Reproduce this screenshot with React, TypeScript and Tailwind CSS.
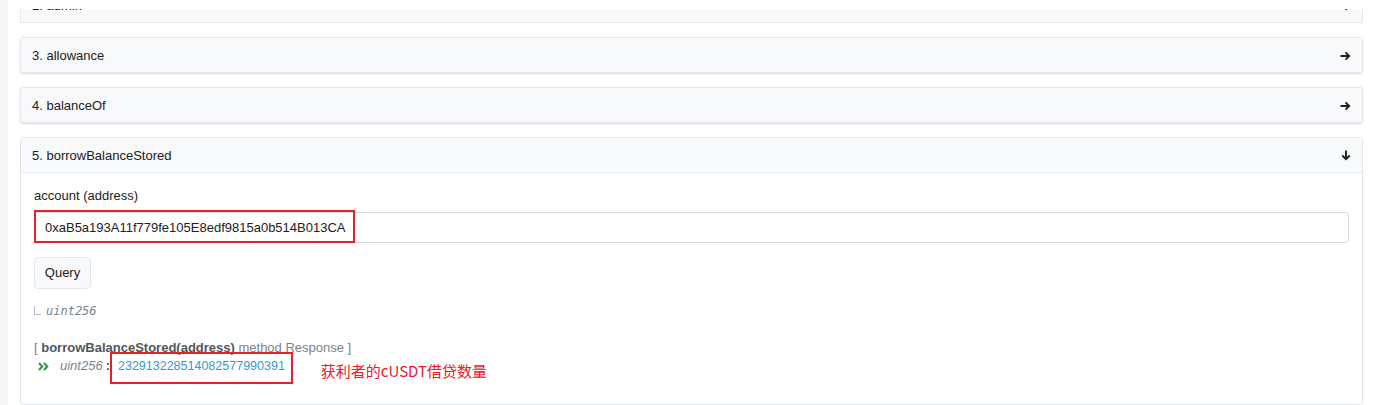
import React from "react";

const font = { fontFamily: '"Liberation Sans", Arial, sans-serif' };

function ArrowRight() {
	return (
		<svg width="11" height="10" viewBox="0 0 11 10" className="text-[#1e2022]">
			<path d="M0.5 5h8.5M5.5 1.3L9.2 5L5.5 8.7" fill="none" stroke="currentColor" strokeWidth="1.9" />
		</svg>
	);
}

function ArrowDown() {
	return (
		<svg width="10" height="11" viewBox="0 0 10 11" className="text-[#1e2022]">
			<path d="M5 0.5v8.5M1.3 5.5L5 9.2L8.7 5.5" fill="none" stroke="currentColor" strokeWidth="1.9" />
		</svg>
	);
}

function Chevrons() {
	return (
		<svg width="11" height="9" viewBox="0 0 11 9" className="text-[#2b9f4c]">
			<path d="M1 1l3.2 3.5L1 8M6 1l3.2 3.5L6 8" fill="none" stroke="currentColor" strokeWidth="2.2" />
		</svg>
	);
}

function Header({ title, open }: { title: string; open?: boolean }) {
	return (
		<div
			className={`flex items-center justify-between pl-[11px] pr-[11px] pt-[1px] bg-[#f8f9fa] text-[13px] text-[#1e2022] ${open ? "h-[35px] border-b border-[#e7eaf3]" : "h-[34px]"}`}
		>
			<span>{title}</span>
			{open ? <ArrowDown /> : <ArrowRight />}
		</div>
	);
}

function Card({ title }: { title: string }) {
	return (
		<div className="border border-[#e3e6ec] rounded-[3px] bg-[#f8f9fa] shadow-[0_1px_2px_rgba(0,0,0,0.14)]">
			<Header title={title} />
		</div>
	);
}

export default function App() {
	return (
		<div className="w-[1373px] h-[405px] overflow-hidden bg-white flex" style={font}>
			<div className="w-[8px] shrink-0 bg-[#f5f6f8]" />
			<div className="flex-1 flex flex-col pl-[12px] pr-[10px]">
				<div className="h-[9px] bg-white shrink-0" />
				<div className="h-[14px] overflow-hidden flex flex-col justify-end shrink-0">
					<Card title="2. admin" />
				</div>
				<div className="mt-[14px]">
					<Card title="3. allowance" />
				</div>
				<div className="mt-[14px]">
					<Card title="4. balanceOf" />
				</div>
				<div className="mt-[14px] border border-[#e3e6ec] rounded-[3px] flex-1">
					<Header title="5. borrowBalanceStored" open />
					<div className="px-[13px] pt-[13px] text-[13px]">
						<div className="text-[#1e2022] leading-[20px]">account (address)</div>
						<div className="relative mt-[6px]">
							<div className="h-[31px] border border-[#d5dae2] rounded-[3px] flex items-center pl-[10px] text-[#1e2022]">
								0xaB5a193A11f779fe105E8edf9815a0b514B013CA
							</div>
							<div className="absolute left-0 top-[-2px] w-[321px] h-[33px] border-2 border-[#e8202a]" />
						</div>
						<button className="mt-[14px] h-[32px] w-[57px] border border-[#e3e6ec] rounded-[4px] bg-[#f8f9fa] text-[#1e2022] text-[13px]">
							Query
						</button>
						<div className="mt-[14px] flex items-center text-[#77838f] h-[16px]">
							<span className="w-[7px] h-[9px] border-l border-b border-[#b8bdc3] mr-[5px] -mt-[1px]" />
							<i className="text-[12px]" style={{ fontFamily: '"DejaVu Sans Mono", monospace' }}>
								uint256
							</i>
						</div>
						<div className="mt-[21px] text-[#77838f] leading-[16px]">
							[ <b className="text-[#50565c]">borrowBalanceStored(address)</b> method Response ]
						</div>
						<div className="flex items-center h-[20px]">
							<span className="ml-[4px] mr-[11px]">
								<Chevrons />
							</span>
							<i className="text-[#77838f]">uint256</i>
							<b className="text-[#50565c] ml-[3px]">:</b>
							<span className="relative ml-[5px] pl-[3px] pr-[8px] text-[12.5px] text-[#3498db]">
								232913228514082577990391
								<span className="absolute left-[-5px] top-[-5px] w-[183px] h-[32px] border-2 border-[#e8202a]" />
							</span>
							<span
								className="ml-[28px] translate-y-[5px] text-[15px] text-[#e8202a]"
								style={{ fontFamily: '"Noto Sans CJK SC", "Liberation Sans", sans-serif' }}
							>
								获利者的cUSDT借贷数量
							</span>
						</div>
					</div>
				</div>
			</div>
		</div>
	);
}
